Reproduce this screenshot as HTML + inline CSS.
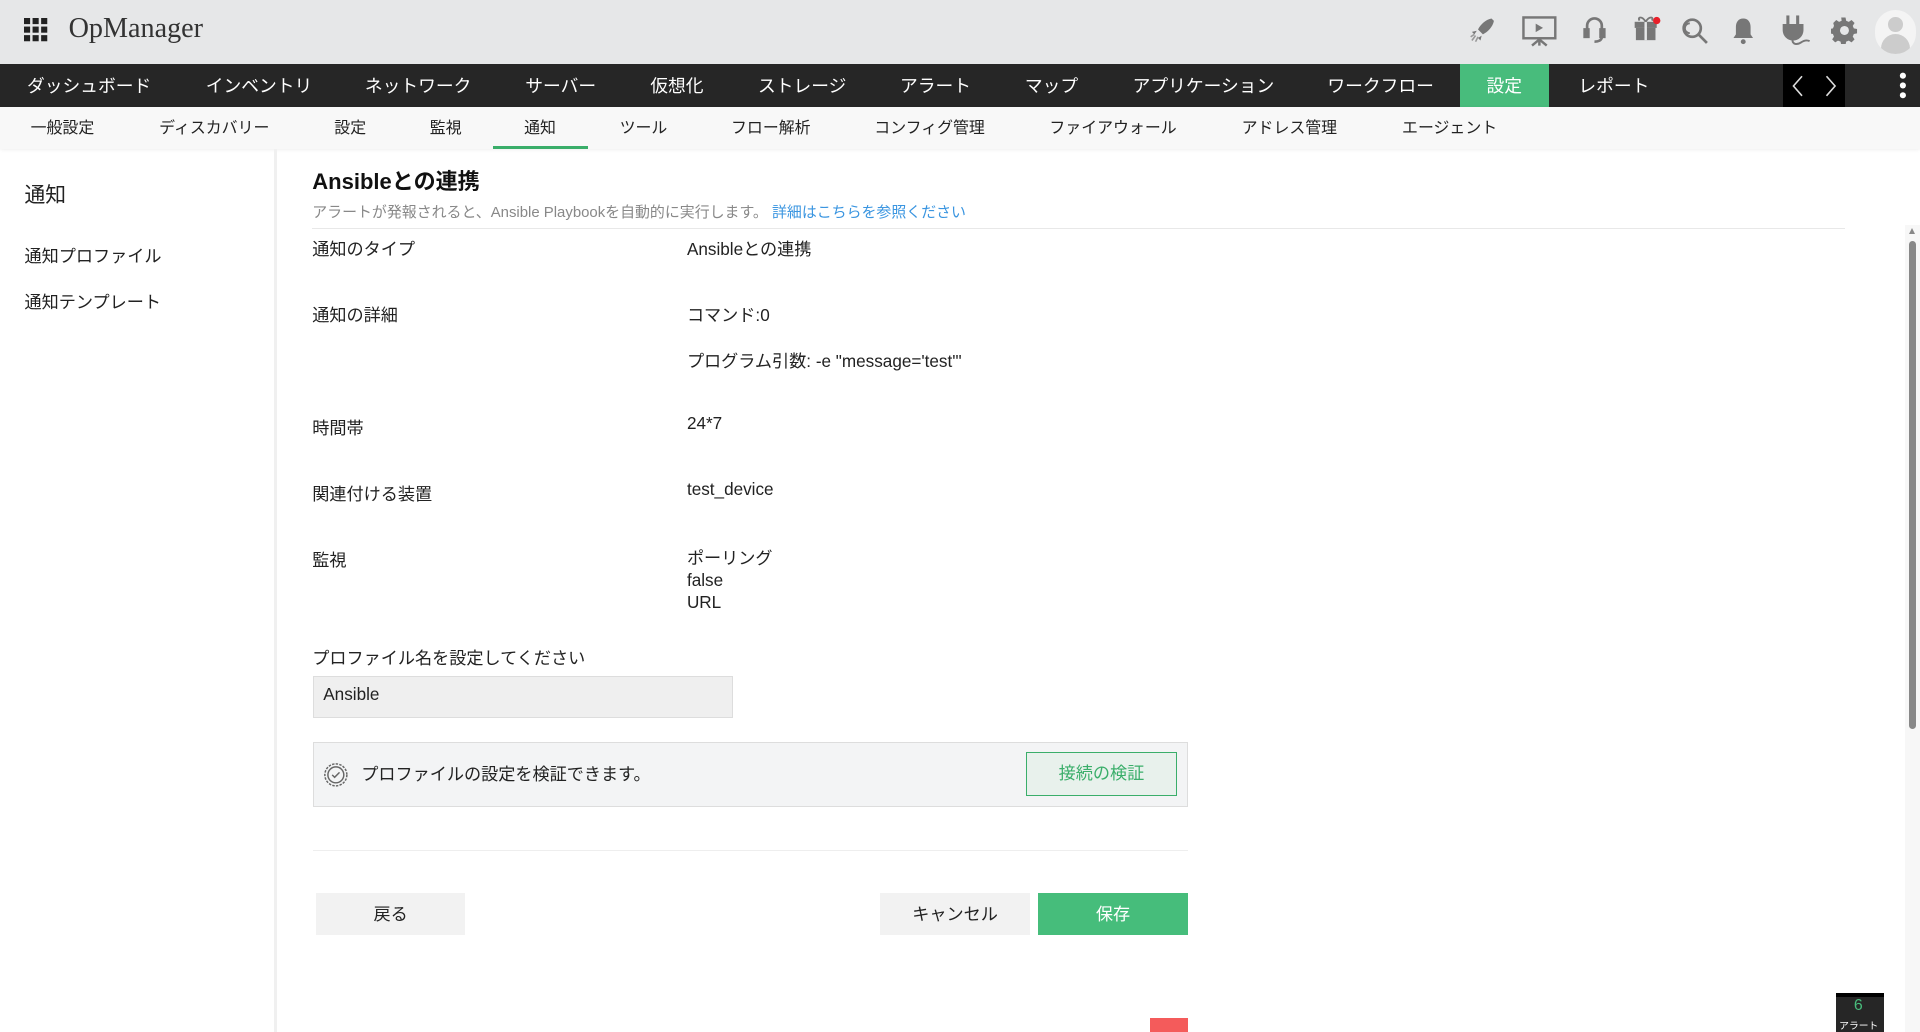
<!DOCTYPE html>
<html><head><meta charset="utf-8"><style>
*{margin:0;padding:0;box-sizing:border-box}
html,body{width:1920px;height:1032px;overflow:hidden;background:#fff}
#w{zoom:1.22449;width:1568px;height:843px;position:relative;overflow:hidden;font-family:"Liberation Sans","Noto Sans CJK JP",sans-serif;color:#222}
.a{position:absolute;white-space:nowrap}
#top{position:absolute;left:0;top:0;width:1568px;height:52px;background:#e6e7e8}
#nav{position:absolute;left:0;top:52px;width:1568px;height:35px;background:#262626;color:#fff;font-size:14.5px}
#nav .a{top:7px}
#sub{position:absolute;left:0;top:87px;width:1568px;height:35px;background:#f8f8f8;font-size:13px;box-shadow:0 1px 3px rgba(0,0,0,.08)}
#sub .a{top:7px}
.lbl{font-size:14px;color:#222}
.btn{position:absolute;height:35px;font-size:14px;text-align:center;line-height:35px}
</style></head><body><div id="w">
<div id="top">
 <svg class="a" style="left:20px;top:15px" width="20" height="20" viewBox="0 0 20 20" fill="#222"><rect x="0" y="0" width="5" height="5"/><rect x="7" y="0" width="5" height="5"/><rect x="14" y="0" width="5" height="5"/><rect x="0" y="7" width="5" height="5"/><rect x="7" y="7" width="5" height="5"/><rect x="14" y="7" width="5" height="5"/><rect x="0" y="14" width="5" height="5"/><rect x="7" y="14" width="5" height="5"/><rect x="14" y="14" width="5" height="5"/></svg>
 <div class="a" style="left:56px;top:11px;font-family:'Liberation Serif',serif;font-size:23px;color:#333">OpManager</div>
 <svg class="a" style="left:1198px;top:13px" width="24" height="24" viewBox="0 0 24 24" fill="#777"><path d="M20 2c-5 1-9 5-11 9l4 4c4-2 8-6 9-11zM8 12l-4 1 2 2zM12 16l-1 4-2-2z"/><path d="M7 16l-3 4M9 17l-2 4M6 15l-3 2" stroke="#999" stroke-width="1.3"/></svg>
 <svg class="a" style="left:1242px;top:12px" width="30" height="26" viewBox="0 0 30 26" fill="none" stroke="#777" stroke-width="2"><rect x="2" y="2" width="26" height="17"/><path d="M12 7l6 3.5-6 3.5z" fill="#777" stroke="none"/><path d="M15 19v6M9 25l6-5 6 5"/></svg>
 <svg class="a" style="left:1291px;top:13px" width="22" height="24" viewBox="0 0 22 24" fill="none" stroke="#777" stroke-width="2.2"><path d="M5 12V8a6 6 0 0 1 12 0v4"/><rect x="3" y="11" width="3" height="6" fill="#777"/><rect x="16" y="11" width="3" height="6" fill="#777"/><path d="M17 17c0 3-3 4-6 4"/></svg>
 <svg class="a" style="left:1332px;top:10px" width="26" height="26" viewBox="0 0 26 26" fill="#777"><rect x="3" y="8" width="18" height="5"/><rect x="4" y="13" width="16" height="10"/><rect x="11" y="8" width="2" height="15" fill="#e6e7e8"/><path d="M12 8c-3-5-7-4-5-1M12 8c3-5 7-4 5-1" stroke="#777" stroke-width="1.5" fill="none"/><circle cx="21" cy="7" r="3" fill="#e8202a"/></svg>
 <svg class="a" style="left:1372px;top:13px" width="24" height="24" viewBox="0 0 24 24" fill="none" stroke="#777" stroke-width="2.2"><circle cx="10" cy="10" r="7"/><path d="M15 15l7 7"/><path d="M8 6a4 4 0 0 0 0 8" stroke-width="1.5"/></svg>
 <svg class="a" style="left:1414px;top:13px" width="20" height="24" viewBox="0 0 20 24" fill="#777"><path d="M10 2c-4 0-6 3-6 7v6l-2 3h16l-2-3V9c0-4-2-7-6-7z"/><circle cx="10" cy="21" r="2"/></svg>
 <svg class="a" style="left:1453px;top:11px" width="26" height="28" viewBox="0 0 26 28" fill="#777"><rect x="6" y="2" width="2.5" height="7"/><rect x="14" y="2" width="2.5" height="7"/><path d="M3 9h17v5a8.5 8.5 0 0 1-17 0z"/><path d="M11 22c0 4 4 4 7 2s5-2 7-1" stroke="#777" stroke-width="1.6" fill="none"/></svg>
 <svg class="a" style="left:1495px;top:14px" width="22" height="22" viewBox="0 0 24 24" fill="#777"><path d="M10 1h4l.6 3 2.4 1 2.6-1.7 2.8 2.8L20.7 8.7l1 2.4 3 .6v4l-3 .6-1 2.4 1.7 2.6-2.8 2.8-2.6-1.700-2.4 1-.6 3h-4l-.6-3-2.4-1-2.6 1.7-2.8-2.8 1.7-2.6-1-2.4-3-.6v-4l3-.6 1-2.4L2.6 6.1l2.8-2.8L8 5l2.4-1z" transform="translate(-0.5,-0.5) scale(0.96)"/><circle cx="12" cy="12" r="4" fill="#e6e7e8"/></svg>
 <div class="a" style="left:1531px;top:8px;width:34px;height:36px;border-radius:17px;background:#f4f4f4;overflow:hidden"><div class="a" style="left:11px;top:6px;width:12px;height:12px;border-radius:6px;background:#ccc"></div><div class="a" style="left:5px;top:20px;width:24px;height:16px;border-radius:12px 12px 0 0;background:#ccc"></div></div>
</div>
<div id="nav">
 <div class="a" style="left:22px">ダッシュボード</div><div class="a" style="left:168px">インベントリ</div><div class="a" style="left:298px">ネットワーク</div><div class="a" style="left:429px">サーバー</div><div class="a" style="left:531px">仮想化</div><div class="a" style="left:619px">ストレージ</div><div class="a" style="left:735px">アラート</div><div class="a" style="left:837px">マップ</div><div class="a" style="left:925px">アプリケーション</div><div class="a" style="left:1084px">ワークフロー</div>
 <div class="a" style="left:1192px;top:0!important;width:73px;height:35px;background:#48bc7c"></div><div class="a" style="left:1214px">設定</div>
 <div class="a" style="left:1289px">レポート</div>
 <div class="a" style="left:1456px;top:0!important;width:51px;height:35px;background:#000"></div>
 <svg class="a" style="left:1463px;top:9px!important" width="38" height="18" viewBox="0 0 38 18" fill="none" stroke="#ddd" stroke-width="1.3"><path d="M9 1L2 9l7 8M29 1l7 8-7 8"/></svg>
 <svg class="a" style="left:1550px;top:7px" width="8" height="22" viewBox="0 0 8 22" fill="#fff"><circle cx="4" cy="3" r="2.5"/><circle cx="4" cy="11" r="2.5"/><circle cx="4" cy="19" r="2.5"/></svg>
</div>
<div id="sub">
 <div class="a" style="left:25px">一般設定</div><div class="a" style="left:130px">ディスカバリー</div><div class="a" style="left:273px">設定</div><div class="a" style="left:351px">監視</div><div class="a" style="left:428px">通知</div><div class="a" style="left:506px">ツール</div><div class="a" style="left:597px">フロー解析</div><div class="a" style="left:714px">コンフィグ管理</div><div class="a" style="left:857px">ファイアウォール</div><div class="a" style="left:1014px">アドレス管理</div><div class="a" style="left:1145px">エージェント</div>
 <div class="a" style="left:403px;top:32px!important;width:77px;height:3px;background:#3aae6a"></div>
</div>
<div class="a" style="left:224px;top:122px;width:2px;height:721px;background:#f0f0f0"></div>
<div class="a" style="left:20px;top:145px;font-size:17px">通知</div>
<div class="a lbl" style="left:20px;top:198px">通知プロファイル</div>
<div class="a lbl" style="left:20px;top:235px">通知テンプレート</div>

<div class="a" style="left:255px;top:134px;font-size:18px;font-weight:bold;color:#111">Ansibleとの連携</div>
<div class="a" style="left:255px;top:164px;font-size:12.2px;color:#888">アラートが発報されると、Ansible Playbookを自動的に実行します。 <span style="color:#3a95e0">詳細はこちらを参照ください</span></div>
<div class="a" style="left:255px;top:186px;width:1252px;height:1px;background:#e8e8e8"></div>
<div class="a lbl" style="left:255px;top:192px">通知のタイプ</div><div class="a lbl" style="left:561px;top:192px">Ansibleとの連携</div>
<div class="a lbl" style="left:255px;top:246px">通知の詳細</div><div class="a lbl" style="left:561px;top:246px">コマンド:0</div>
<div class="a lbl" style="left:561px;top:283px">プログラム引数: -e "message='test'"</div>
<div class="a lbl" style="left:255px;top:338px">時間帯</div><div class="a lbl" style="left:561px;top:337px">24*7</div>
<div class="a lbl" style="left:255px;top:392px">関連付ける装置</div><div class="a lbl" style="left:561px;top:391px">test_device</div>
<div class="a lbl" style="left:255px;top:446px">監視</div>
<div class="a lbl" style="left:561px;top:447px;line-height:18px;white-space:normal">ポーリング<br>false<br>URL</div>
<div class="a lbl" style="left:255px;top:526px">プロファイル名を設定してください</div>
<div class="a" style="left:256px;top:552px;width:343px;height:34px;background:#efefef;border:1px solid #ddd"></div>
<div class="a lbl" style="left:264px;top:559px">Ansible</div>
<div class="a" style="left:256px;top:606px;width:714px;height:53px;background:#f3f4f5;border:1px solid #ddd"></div>
<svg class="a" style="left:264px;top:622px" width="21" height="21" viewBox="0 0 21 21" fill="none" stroke="#666" stroke-width="1.2"><circle cx="10.5" cy="10.5" r="9" stroke-dasharray="2 1"/><circle cx="10.5" cy="10.5" r="6.5"/><path d="M7.5 10.5l2 2 4-4"/></svg>
<div class="a lbl" style="left:295px;top:621px">プロファイルの設定を検証できます。</div>
<div class="btn" style="left:838px;top:614px;width:123px;height:36px;background:#e8f1ec;border:1px solid #3aae6a;color:#3aae6a;line-height:34px">接続の検証</div>
<div class="a" style="left:256px;top:694px;width:714px;height:1px;background:#eee"></div>
<div class="btn" style="left:258px;top:729px;width:122px;background:#f2f2f2">戻る</div>
<div class="btn" style="left:719px;top:729px;width:122px;background:#f2f2f2">キャンセル</div>
<div class="btn" style="left:848px;top:729px;width:122px;background:#46bd7b;color:#fff">保存</div>
<div class="a" style="left:939px;top:831px;width:31px;height:12px;background:#f45b5b"></div>
<div class="a" style="left:1556px;top:184px;width:12px;height:659px;background:#f7f7f7"></div>
<div class="a" style="left:1559px;top:197px;width:6px;height:398px;border-radius:3px;background:#888"></div>
<div class="a" style="left:1559px;top:186px;width:0;height:0;border-left:3px solid transparent;border-right:3px solid transparent;border-bottom:5px solid #888"></div>
<div class="a" style="left:1499px;top:811px;width:40px;height:32px;background:#262626;border-top:4px solid #000"></div>
<div class="a" style="left:1514px;top:814px;font-size:13px;color:#48bc7c">6</div>
<div class="a" style="left:1502px;top:831px;font-size:8px;color:#fff">アラート</div>
</div></body></html>
